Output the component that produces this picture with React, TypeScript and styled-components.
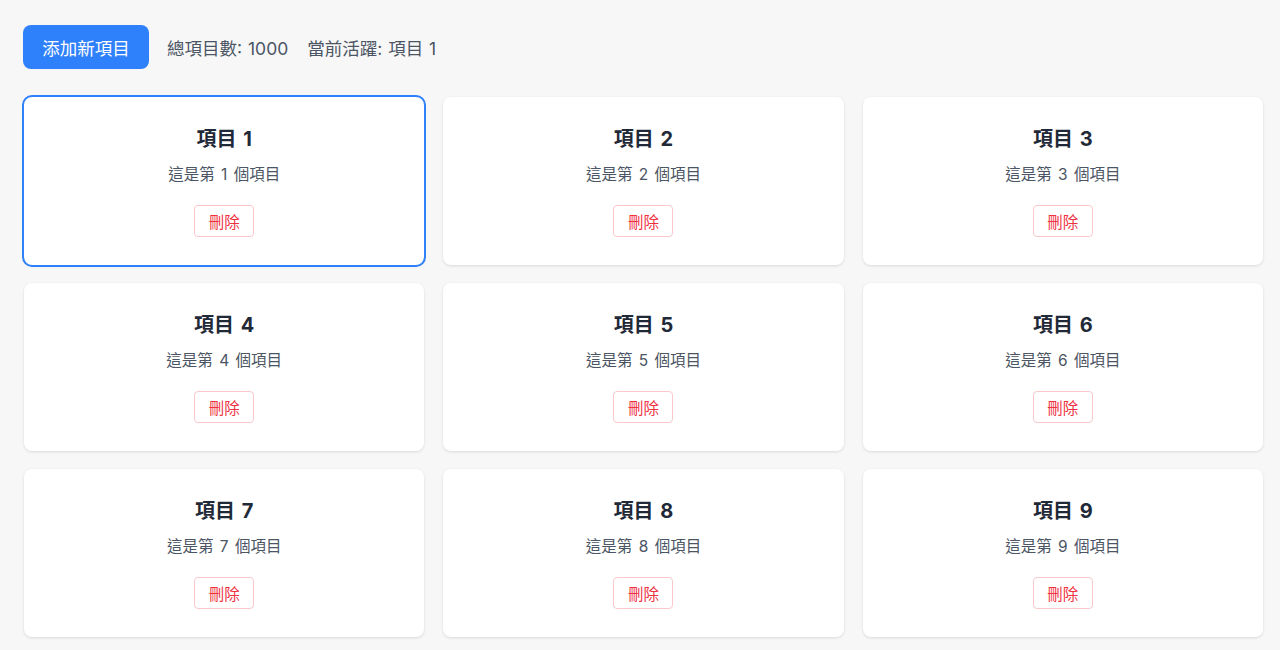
import { useState } from "react";
import styled, { createGlobalStyle } from "styled-components";

const GlobalStyle = createGlobalStyle`
    html {
        scrollbar-width: none;
    }
    html::-webkit-scrollbar {
        display: none;
    }
    body {
        margin: 0;
        background: #f7f7f8;
        font-family: Inter, "Noto Sans CJK TC", sans-serif;
    }
`;

const Page = styled.div`
    padding: 24px 17px 24px 24px;
`;

const Toolbar = styled.div`
    display: flex;
    align-items: center;
    gap: 19px;
    margin-bottom: 28px;
    margin-top: 1px;
`;

const AddButton = styled.button`
    background: #2f80fb;
    color: #fff;
    border: none;
    border-radius: 8px;
    height: 44px;
    width: 126px;
    padding: 0;
    margin-left: -1px;
    margin-right: -1px;
    font-family: inherit;
    font-size: 17.5px;
    cursor: pointer;
`;

const Stat = styled.span`
    color: #4b5563;
    font-size: 17.5px;
    word-spacing: 1px;
`;

const Grid = styled.div`
    display: grid;
    grid-template-columns: repeat(3, 1fr);
    column-gap: 19px;
    row-gap: 18px;
`;

const Card = styled.div<{ $active: boolean }>`
    background: #fff;
    border-radius: 8px;
    box-shadow: 0 1px 3px rgba(0, 0, 0, 0.12);
    padding: 28px 24px;
    height: 168px;
    box-sizing: border-box;
    display: flex;
    flex-direction: column;
    align-items: center;
    outline: ${(p) => (p.$active ? "2px solid #2f80fb" : "none")};
`;

const Title = styled.h3`
    margin: 0;
    font-size: 20px;
    line-height: 28px;
    font-weight: 700;
    word-spacing: 2px;
    color: #1f2937;
`;

const Desc = styled.p`
    margin: 12px 0 0;
    font-size: 15.5px;
    line-height: 20px;
    word-spacing: 2px;
    color: #4b5563;
`;

const DeleteButton = styled.button`
    margin-top: 20px;
    background: #fff;
    color: #f0323f;
    border: 1px solid #fdc8cc;
    border-radius: 4px;
    height: 32px;
    width: 60px;
    padding: 0;
    font-family: inherit;
    font-size: 15.5px;
    cursor: pointer;
`;

type Item = { id: number };

export default function App(): JSX.Element {
    const [items, setItems] = useState<Item[]>(() =>
        Array.from({ length: 1000 }, (_, i) => ({ id: i + 1 }))
    );
    const [active, setActive] = useState(1);

    const add = () => setItems((prev) => [...prev, { id: prev.length ? prev[prev.length - 1].id + 1 : 1 }]);
    const remove = (id: number) => setItems((prev) => prev.filter((it) => it.id !== id));

    return (
        <Page>
            <GlobalStyle />
            <Toolbar>
                <AddButton onClick={add}>添加新項目</AddButton>
                <Stat>總項目數: {items.length}</Stat>
                <Stat>當前活躍: 項目 {active}</Stat>
            </Toolbar>
            <Grid>
                {items.map((it) => (
                    <Card key={it.id} $active={it.id === active} onClick={() => setActive(it.id)}>
                        <Title>項目 {it.id}</Title>
                        <Desc>這是第 {it.id} 個項目</Desc>
                        <DeleteButton
                            onClick={(e) => {
                                e.stopPropagation();
                                remove(it.id);
                            }}
                        >
                            刪除
                        </DeleteButton>
                    </Card>
                ))}
            </Grid>
        </Page>
    );
}
